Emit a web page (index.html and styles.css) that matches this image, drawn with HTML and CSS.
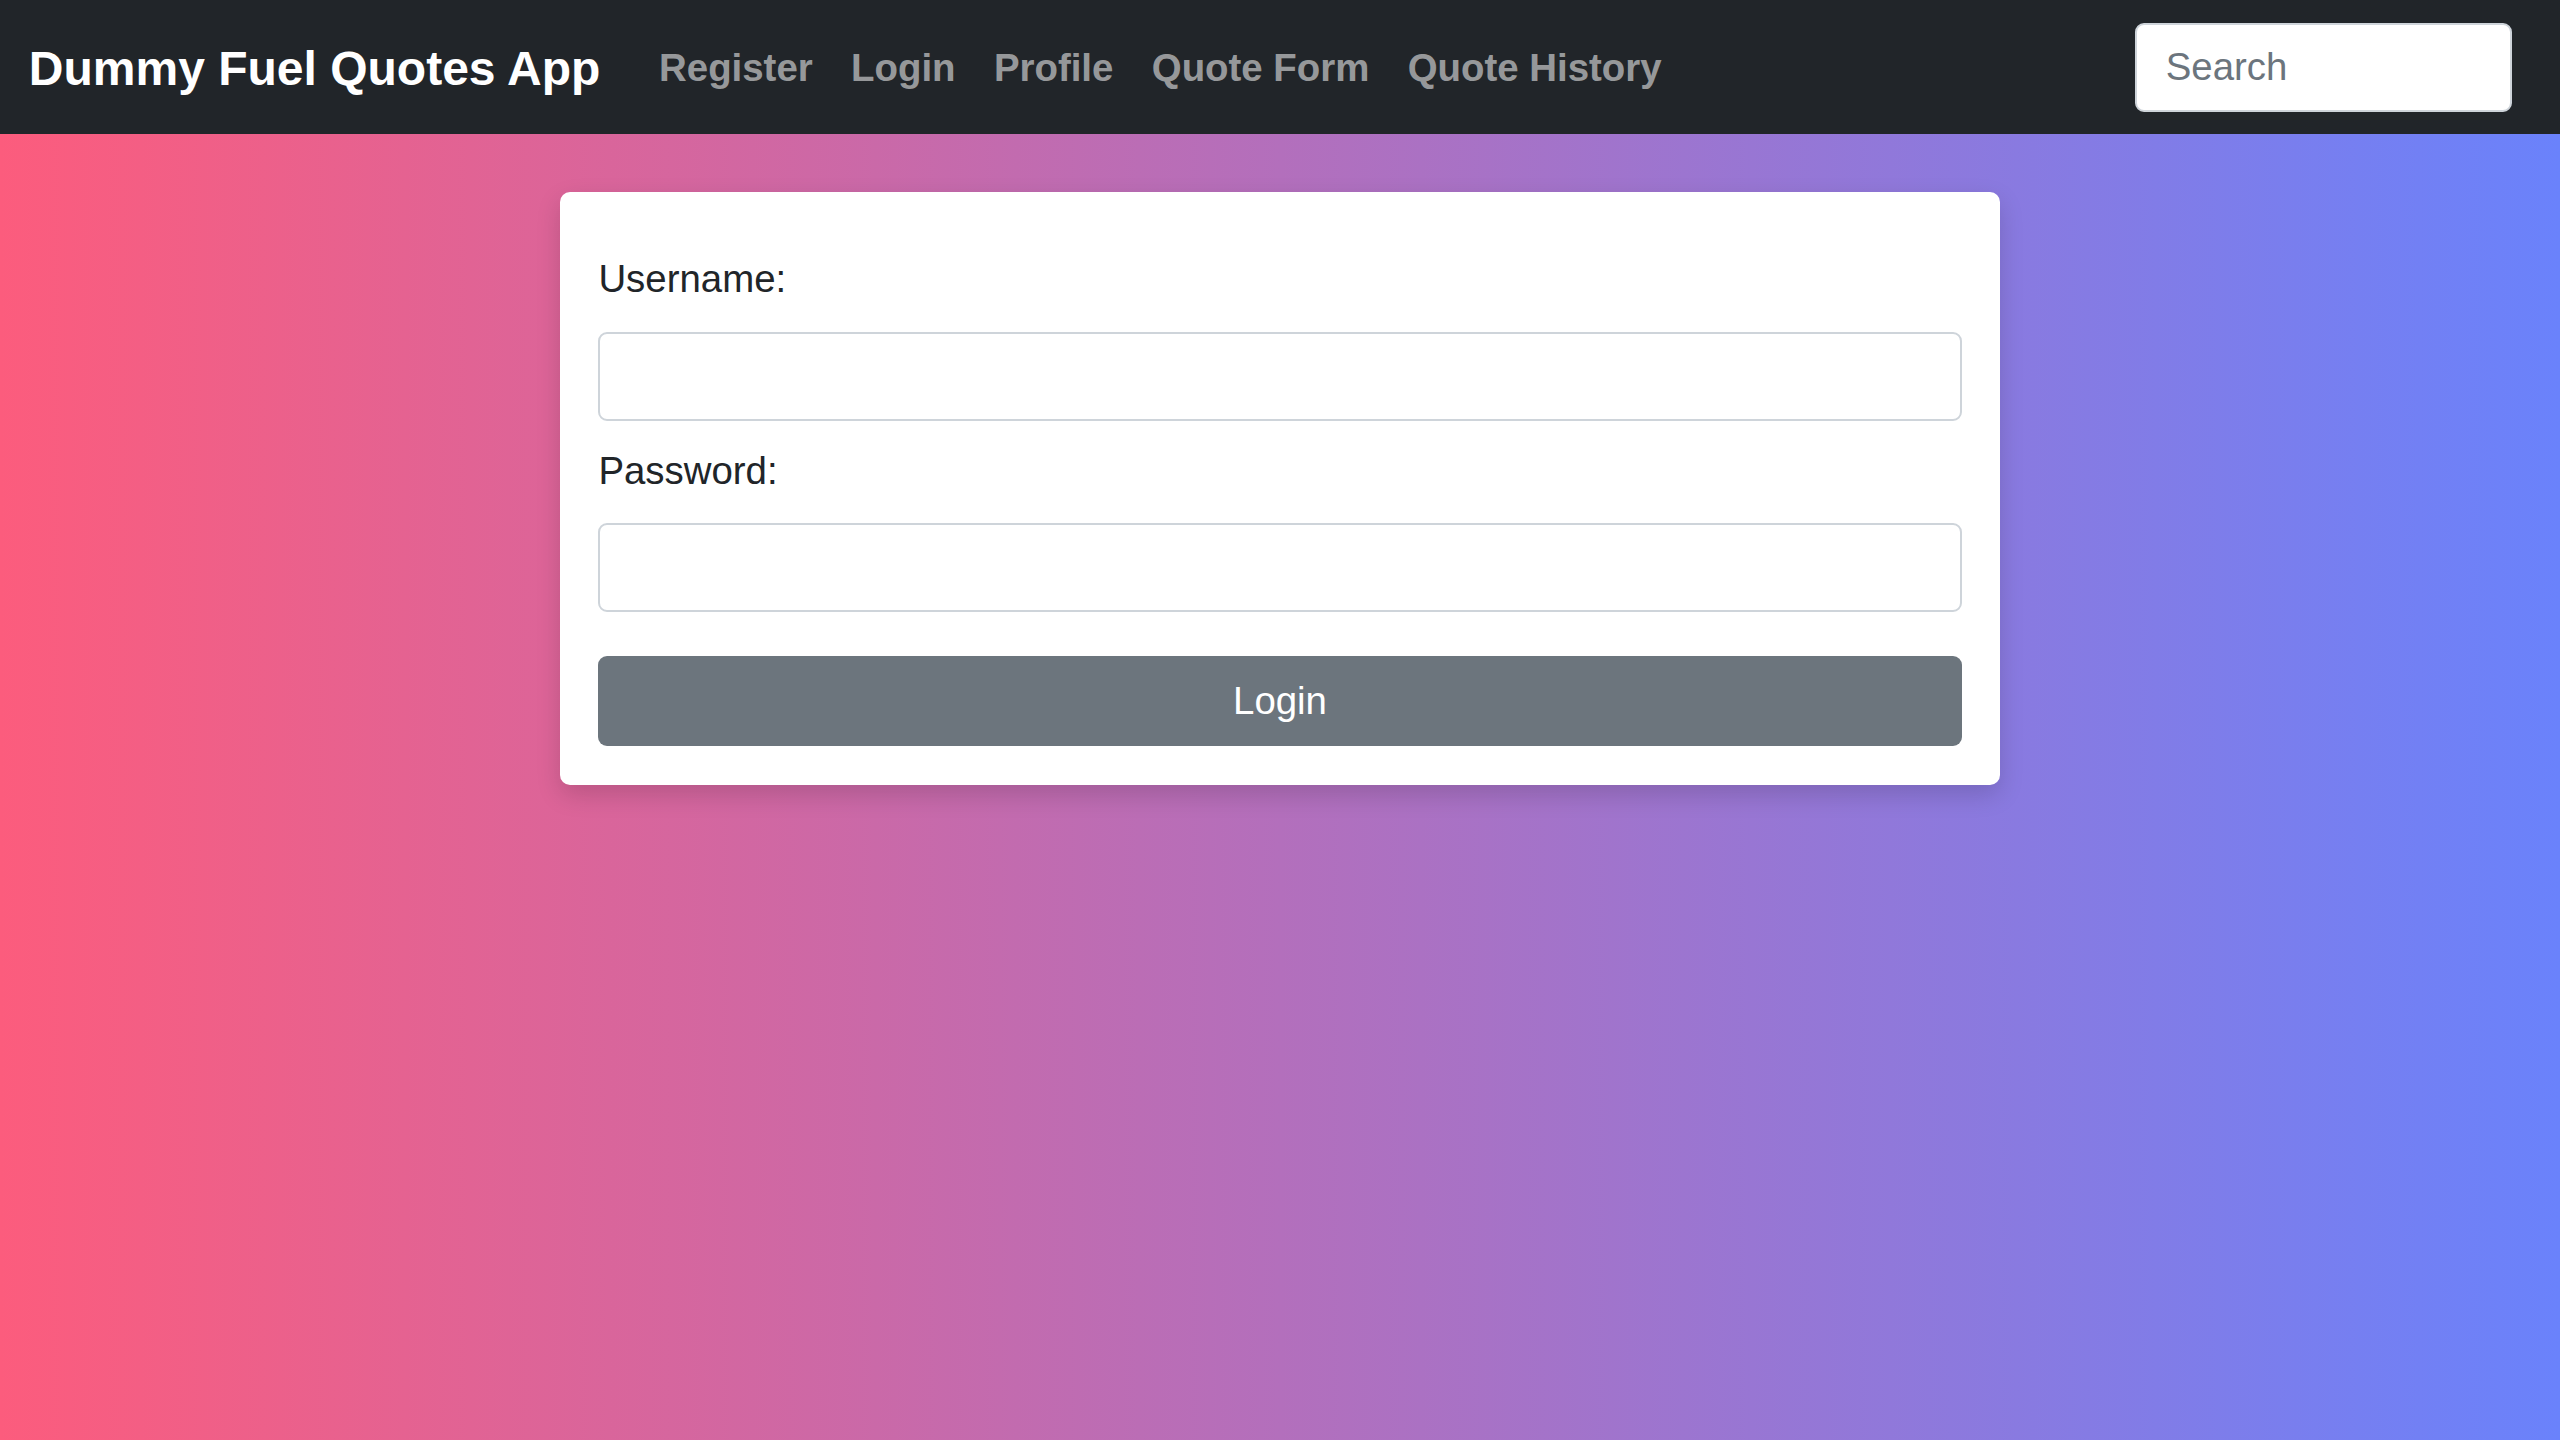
FILE: index.html
```html
<!DOCTYPE html>
<html lang="en">
<head>
<meta charset="utf-8">
<title>Dummy Fuel Quotes App - Login</title>
<link rel="stylesheet" href="styles.css">
</head>
<body>
<nav class="navbar">
  <div class="nav-inner">
    <a class="brand" href="#">Dummy Fuel Quotes App</a>
    <ul class="nav-links">
      <li><a href="#">Register</a></li>
      <li><a href="#">Login</a></li>
      <li><a href="#">Profile</a></li>
      <li><a href="#">Quote Form</a></li>
      <li><a href="#">Quote History</a></li>
    </ul>
    <form class="search-form">
      <input class="search-input" type="search" placeholder="Search">
    </form>
  </div>
</nav>
<main class="page">
  <div class="card">
    <form class="login-form">
      <label class="field-label" for="username">Username:</label>
      <input class="field-input" id="username" type="text">
      <label class="field-label second" for="password">Password:</label>
      <input class="field-input" id="password" type="password">
      <button class="btn-login" type="button">Login</button>
    </form>
  </div>
</main>
</body>
</html>
```

FILE: styles.css
```css
* {
  box-sizing: border-box;
}

html, body {
  margin: 0;
  padding: 0;
}

body {
  min-height: 100vh;
  font-family: "Liberation Sans", Arial, sans-serif;
  font-size: 38.4px;
  line-height: 1.5;
  color: #212529;
  background: linear-gradient(to right, #fc5c7d, #6a82fb);
  background-attachment: fixed;
}

.navbar {
  background: #212529;
  padding: 19.2px 28.8px;
}

.nav-inner {
  display: flex;
  align-items: center;
}

.brand {
  font-size: 48px;
  font-weight: bold;
  line-height: 72px;
  padding: 13.5px 0 10.5px;
  margin-right: 39.5px;
  color: #ffffff;
  text-decoration: none;
  white-space: nowrap;
}

.nav-links {
  display: flex;
  list-style: none;
  margin: 0;
  padding: 0;
  flex: 1;
}

.nav-links a {
  display: block;
  padding: 1.5px 19.2px 0;
  font-size: 38.4px;
  font-weight: bold;
  line-height: 57.6px;
  color: rgba(255, 255, 255, 0.55);
  text-decoration: none;
  white-space: nowrap;
}

.search-form {
  margin: 0 19.5px 0 0;
}

.search-input {
  display: block;
  width: 377px;
  height: 89px;
  padding: 0 29px;
  font-family: "Liberation Sans", Arial, sans-serif;
  font-size: 38.4px;
  color: #212529;
  background: #ffffff;
  border: 2px solid #ced4da;
  border-radius: 9px;
  outline: none;
}

.search-input::placeholder {
  color: #6c757d;
  opacity: 1;
}

.page {
  display: flex;
  justify-content: center;
  padding-top: 57.6px;
}

.card {
  width: 1440px;
  background: #ffffff;
  border-radius: 10px;
  padding: 58px 38.4px 38.4px;
  box-shadow: 0 9.6px 24px rgba(0, 0, 0, 0.15);
}

.login-form {
  display: flex;
  flex-direction: column;
}

.field-label {
  display: block;
  font-size: 38.4px;
  line-height: 57.6px;
  margin-bottom: 24px;
  color: #212529;
}

.field-label.second {
  margin-top: 21px;
}

.field-input {
  display: block;
  width: 100%;
  height: 89px;
  padding: 0 29px;
  font-family: "Liberation Sans", Arial, sans-serif;
  font-size: 38.4px;
  color: #212529;
  background: #ffffff;
  border: 2px solid #ced4da;
  border-radius: 9px;
  outline: none;
}

.btn-login {
  display: block;
  width: 100%;
  height: 90px;
  margin-top: 44px;
  font-family: "Liberation Sans", Arial, sans-serif;
  font-size: 38.4px;
  color: #ffffff;
  background: #6c757d;
  border: none;
  border-radius: 9px;
  cursor: pointer;
}
```
